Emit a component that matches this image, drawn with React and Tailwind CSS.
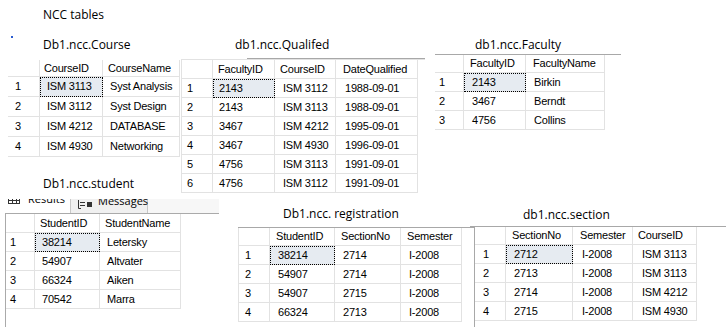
import React from "react";

const LINE = "border-[#e2e2e2]";
const TITLE = "font-['Open_Sans',sans-serif] text-[12px] leading-[16px] text-black whitespace-nowrap";

function Grid({ rnW, rnPad, colW, hPad, dPad, headers, rows, hH, rH, outer = "" }) {
  return (
    <div className={`${outer} font-['Liberation_Sans',Arial,sans-serif] text-[11px] tracking-[-0.2px] text-black leading-none whitespace-nowrap`}>
      <div className={`flex ${hH}`}>
        <div className={`${rnW} shrink-0 border-r border-b ${LINE}`} />
        {headers.map((h, i) => (
          <div key={i} className={`${colW[i]} ${hPad[i]} shrink-0 flex items-center border-r border-b ${LINE}`}>
            {h}
          </div>
        ))}
      </div>
      {rows.map((r, ri) => (
        <div key={ri} className={`flex ${rH}`}>
          <div className={`${rnW} ${rnPad} shrink-0 flex items-center border-r border-b ${LINE}`}>{ri + 1}</div>
          {r.map((c, ci) => (
            <div
              key={ci}
              className={`${colW[ci]} ${dPad[ci]} shrink-0 flex items-center border-r border-b ${LINE} ${
                ri === 0 && ci === 0 ? "bg-[#e6ebf1] outline-1 outline-dotted outline-black -outline-offset-1" : ""
              }`}
            >
              {c}
            </div>
          ))}
        </div>
      ))}
    </div>
  );
}

export default function App() {
  return (
    <div className="relative w-[726px] h-[327px] bg-white overflow-hidden">
      {/* page heading in flow */}
      <div className="flex flex-col pt-[7px]">
        <div className={`${TITLE} pl-[43px]`}>NCC tables</div>
        <div className="ml-[11px] mt-[13px] w-[2px] h-[2px] bg-[#2a5bd0]" />
      </div>

      {/* Course snippet */}
      <div className="absolute left-[8px] top-[37px] flex flex-col">
        <div className={`${TITLE} pl-[35px] h-[23px]`}>Db1.ncc.Course</div>
        <Grid
          rnW="w-[32px]"
          rnPad="pl-[7px]"
          colW={["w-[63px]", "w-[77px]"]}
          hPad={["pl-[4px]", "pl-[5px]"]}
          dPad={["pl-[7px]", "pl-[7px]"]}
          headers={["CourseID", "CourseName"]}
          rows={[
            ["ISM 3113", "Syst Analysis"],
            ["ISM 3112", "Syst Design"],
            ["ISM 4212", "DATABASE"],
            ["ISM 4930", "Networking"],
          ]}
          hH="h-[17px]"
          rH="h-[20px]"
        />
      </div>

      {/* Qualified snippet */}
      <div className="absolute left-[181px] top-[37px] flex flex-col">
        <div className={`${TITLE} pl-[54px] h-[21px]`}>db1.ncc.Qualifed</div>
        <div className="ml-[66px] w-[178px] h-px bg-[#a8a8a8]" />
        <Grid
          outer={`border-l border-t ${LINE}`}
          rnW="w-[31px]"
          rnPad="pl-[5px]"
          colW={["w-[62px]", "w-[61px]", "w-[82px]"]}
          hPad={["pl-[5px]", "pl-[5px]", "pl-[7px]"]}
          dPad={["pl-[6px]", "pl-[8px]", "pl-[9px]"]}
          headers={["FacultyID", "CourseID", "DateQualified"]}
          rows={[
            ["2143", "ISM 3112", "1988-09-01"],
            ["2143", "ISM 3113", "1988-09-01"],
            ["3467", "ISM 4212", "1995-09-01"],
            ["3467", "ISM 4930", "1996-09-01"],
            ["4756", "ISM 3113", "1991-09-01"],
            ["4756", "ISM 3112", "1991-09-01"],
          ]}
          hH="h-[19px]"
          rH="h-[19px]"
        />
      </div>

      {/* Faculty snippet */}
      <div className="absolute left-[435px] top-[37px] flex flex-col">
        <div className={`${TITLE} pl-[40px] h-[17px]`}>db1.ncc.Faculty</div>
        <div className="w-[186px] border-t border-[#a8a8a8]">
          <Grid
            rnW="w-[29px]"
            rnPad="pl-[4px]"
            colW={["w-[62px]", "w-[79px]"]}
            hPad={["pl-[6px]", "pl-[7px]"]}
            dPad={["pl-[8px]", "pl-[8px]"]}
            headers={["FacultyID", "FacultyName"]}
            rows={[
              ["2143", "Birkin"],
              ["3467", "Berndt"],
              ["4756", "Collins"],
            ]}
            hH="h-[18px]"
            rH="h-[19px]"
          />
        </div>
      </div>

      {/* Student snippet */}
      <div className="absolute left-0 top-[176px] flex flex-col">
        <div className={`${TITLE} pl-[43px] h-[23px]`}>Db1.ncc.student</div>
        {/* cropped tab strip */}
        <div className="w-[219px] h-[14px] overflow-hidden flex font-['Open_Sans',sans-serif] text-[11px] leading-[14px] text-black">
          <div className="w-[70px] shrink-0 flex items-start gap-[8px] pl-[8px]">
            <svg width="12" height="5" viewBox="0 5 12 5" className="shrink-0">
              <rect x="0.5" y="0.5" width="11" height="9" fill="none" stroke="#333" />
              <line x1="0" y1="6.5" x2="12" y2="6.5" stroke="#333" />
              <line x1="4.5" y1="0" x2="4.5" y2="10" stroke="#333" />
              <line x1="8.5" y1="0" x2="8.5" y2="10" stroke="#333" />
            </svg>
            <span className="-mt-[7px]">Results</span>
          </div>
          <div className="w-[78px] shrink-0 flex items-start gap-[6px] pl-[7px] bg-[#f0f0f0] border-l border-r border-[#c8c8c8]">
            <svg width="14" height="9" viewBox="0 0 14 9" className="mt-[1px] shrink-0">
              <path d="M0.5 0 V8.5 H3" fill="none" stroke="#333" />
              <line x1="2" y1="2.5" x2="7" y2="2.5" stroke="#333" />
              <line x1="2" y1="5.5" x2="7" y2="5.5" stroke="#333" />
              <rect x="9" y="2" width="5" height="5" fill="#333" />
            </svg>
            <span className="-mt-[5px]">Messages</span>
          </div>
          <div className="flex-1 bg-[#f7f7f7]" />
        </div>
        <div className="ml-[5px] w-[214px] h-[114px] border-t border-l border-[#aaaaaa]">
          <Grid
            rnW="w-[29px]"
            rnPad="pl-[4px]"
            colW={["w-[65px]", "w-[81px]"]}
            hPad={["pl-[5px]", "pl-[5px]"]}
            dPad={["pl-[7px]", "pl-[7px]"]}
            headers={["StudentID", "StudentName"]}
            rows={[
              ["38214", "Letersky"],
              ["54907", "Altvater"],
              ["66324", "Aiken"],
              ["70542", "Marra"],
            ]}
            hH="h-[19px]"
            rH="h-[19px]"
          />
        </div>
      </div>

      {/* Registration snippet */}
      <div className="absolute left-[238px] top-[206px] flex flex-col">
        <div className={`${TITLE} pl-[45px] h-[21px]`}>Db1.ncc. registration</div>
        <div className="w-[237px] border-t border-[#a8a8a8]">
          <Grid
            outer={`border-l ${LINE} w-fit`}
            rnW="w-[31px]"
            rnPad="pl-[6px]"
            colW={["w-[65px]", "w-[66px]", "w-[61px]"]}
            hPad={["pl-[6px]", "pl-[6px]", "pl-[6px]"]}
            dPad={["pl-[8px]", "pl-[8px]", "pl-[8px]"]}
            headers={["StudentID", "SectionNo", "Semester"]}
            rows={[
              ["38214", "2714", "I-2008"],
              ["54907", "2714", "I-2008"],
              ["54907", "2715", "I-2008"],
              ["66324", "2713", "I-2008"],
            ]}
            hH="h-[18px]"
            rH="h-[19px]"
          />
        </div>
      </div>

      {/* Section snippet */}
      <div className="absolute left-[470px] top-[207px] flex flex-col">
        <div className={`${TITLE} pl-[53px] h-[19px]`}>db1.ncc.section</div>
        <div className="w-[256px] h-[101px] border-t border-[#a8a8a8] pl-[4px] flex">
          <div className="h-full border-l border-[#a8a8a8]">
            <Grid
              rnW="w-[31px]"
              rnPad="pl-[8px]"
              colW={["w-[67px]", "w-[60px]", "w-[64px]"]}
              hPad={["pl-[6px]", "pl-[7px]", "pl-[5px]"]}
              dPad={["pl-[8px]", "pl-[9px]", "pl-[9px]"]}
              headers={["SectionNo", "Semester", "CourseID"]}
              rows={[
                ["2712", "I-2008", "ISM 3113"],
                ["2713", "I-2008", "ISM 3113"],
                ["2714", "I-2008", "ISM 4212"],
                ["2715", "I-2008", "ISM 4930"],
              ]}
              hH="h-[18px]"
              rH="h-[19px]"
            />
          </div>
        </div>
      </div>
    </div>
  );
}
